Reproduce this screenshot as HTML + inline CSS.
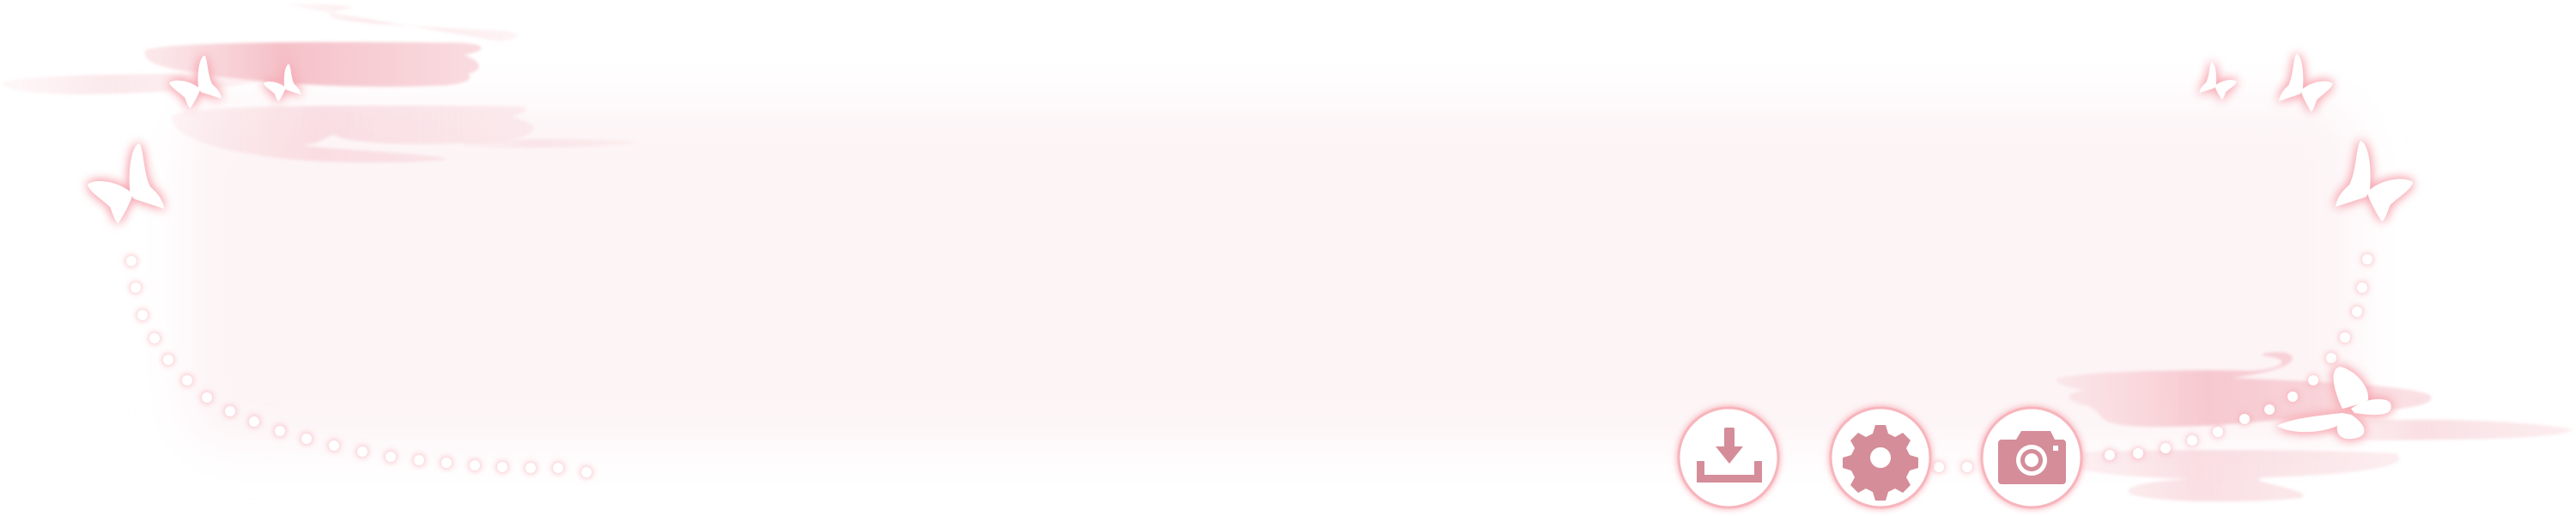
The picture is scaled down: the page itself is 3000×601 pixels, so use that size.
<!DOCTYPE html>
<html><head><meta charset="utf-8"><style>
html,body{margin:0;padding:0;background:#fff;}
body{width:3000px;height:601px;overflow:hidden;position:relative;}
svg{position:absolute;left:0;top:0;}
</style></head><body>
<svg width="3000" height="601" viewBox="0 0 3000 601" xmlns="http://www.w3.org/2000/svg">
<defs>
<filter id="blur40" x="-20%" y="-50%" width="140%" height="200%"><feGaussianBlur stdDeviation="28"/></filter>
<filter id="blur3"><feGaussianBlur stdDeviation="1.5"/></filter>
<filter id="glow" x="-50%" y="-50%" width="200%" height="200%">
<feGaussianBlur in="SourceAlpha" stdDeviation="6" result="b"/>
<feFlood flood-color="#f7a9b2"/><feComposite in2="b" operator="in" result="g"/>
<feMerge><feMergeNode in="g"/><feMergeNode in="g"/><feMergeNode in="SourceGraphic"/></feMerge>
</filter>
<filter id="dglow" x="-100%" y="-100%" width="300%" height="300%">
<feGaussianBlur in="SourceAlpha" stdDeviation="4" result="b"/>
<feFlood flood-color="#f7a3ad"/><feComposite in2="b" operator="in" result="g"/>
<feMerge><feMergeNode in="g"/><feMergeNode in="SourceGraphic"/></feMerge>
</filter>
<linearGradient id="cl" x1="0" x2="1"><stop offset="0" stop-color="#f8d3d8" stop-opacity=".5"/><stop offset=".4" stop-color="#f5c0c8"/><stop offset="1" stop-color="#f7cdd3" stop-opacity=".7"/></linearGradient>
<g id="bf">
<path d="M55,64 C52,35 56,5 66,1 C72,8 71,38 80,55 C88,62 95,70 97,82 L60,70 Z"/>
<path d="M56,62 C40,48 12,44 2,52 C5,62 20,70 30,80 C34,90 36,97 40,100 C47,90 52,80 57,68 Z"/>
</g>
</defs>

<rect x="215" y="120" width="2530" height="400" rx="50" fill="#fdf4f6" filter="url(#blur40)"/>

<g fill="url(#cl)" filter="url(#blur3)">
<path d="M335,6 C370,3 410,6 410,10 C390,12 375,16 390,22 C430,30 520,32 590,36 C610,40 605,46 580,48 Z" opacity=".35"/>
<path d="M170,58 C200,48 400,48 540,50 C570,52 565,60 540,64 C560,70 565,82 545,86 C555,95 530,100 500,100 C400,104 280,96 200,80 C170,74 165,64 170,58 Z"/>
<path d="M2,97 C10,86 220,84 310,88 C320,100 200,108 100,110 C50,110 5,106 2,97 Z" opacity=".35"/>
<path d="M200,135 C215,122 420,122 605,124 C625,128 600,134 595,136 C635,145 630,160 575,165 C500,170 420,168 395,160 C385,152 380,165 360,168 C320,172 520,178 520,186 C470,192 340,190 300,180 C230,172 195,150 200,135 Z" opacity=".45"/>
<path d="M540,165 C620,160 700,162 746,166 C700,172 600,174 540,170 Z" opacity=".3"/>
<path d="M2395,442 C2410,432 2560,430 2620,432 C2660,430 2670,418 2640,415 C2620,412 2660,408 2665,412 C2680,420 2660,432 2600,440 C2700,445 2800,448 2830,460 C2840,472 2800,478 2720,482 C2650,490 2540,502 2470,495 C2440,490 2450,480 2430,472 C2400,466 2405,456 2430,455 C2400,450 2395,446 2395,442 Z" opacity=".85"/>
<path d="M2700,492 C2800,486 2930,488 2996,500 C2990,512 2850,512 2780,513 C2740,514 2700,508 2700,492 Z" opacity=".5"/>
<path d="M2400,528 C2460,524 2650,522 2790,528 C2810,542 2760,552 2640,556 C2600,560 2700,570 2680,580 C2600,588 2500,584 2480,575 C2470,565 2510,560 2550,558 C2480,556 2420,550 2400,540 Z" opacity=".5"/>
</g>

<g fill="#fff" filter="url(#dglow)">
<circle cx="153" cy="304" r="6"/><circle cx="158" cy="335" r="6"/><circle cx="166" cy="367" r="6"/><circle cx="180" cy="394" r="6"/><circle cx="196" cy="419" r="6"/><circle cx="218" cy="443" r="6"/><circle cx="241" cy="463" r="6"/><circle cx="268" cy="479" r="6"/><circle cx="296" cy="491" r="6"/><circle cx="326" cy="502" r="6"/><circle cx="357" cy="511" r="6"/><circle cx="389" cy="519" r="6"/><circle cx="422" cy="526" r="6"/><circle cx="455" cy="532" r="6"/><circle cx="488" cy="536" r="6"/><circle cx="520" cy="539" r="6"/><circle cx="553" cy="542" r="6"/><circle cx="585" cy="544" r="6"/><circle cx="618" cy="545" r="6"/><circle cx="650" cy="545" r="6"/><circle cx="683" cy="550" r="6"/>
<circle cx="2757" cy="302" r="6"/><circle cx="2751" cy="335" r="6"/><circle cx="2745" cy="363" r="6"/><circle cx="2731" cy="393" r="6"/><circle cx="2715" cy="417" r="6"/><circle cx="2694" cy="443" r="6"/><circle cx="2670" cy="462" r="6"/><circle cx="2643" cy="477" r="6"/><circle cx="2614" cy="488" r="6"/><circle cx="2583" cy="503" r="6"/><circle cx="2553" cy="513" r="6"/><circle cx="2522" cy="522" r="6"/><circle cx="2490" cy="528" r="6"/><circle cx="2457" cy="530" r="6"/><circle cx="2258" cy="544" r="6"/><circle cx="2291" cy="544" r="6"/>
</g>

<g fill="#fff" filter="url(#glow)">
<use href="#bf" transform="translate(100,166) scale(0.94,0.94)"/>
<use href="#bf" transform="translate(196,64) scale(0.64,0.62)"/>
<use href="#bf" transform="translate(306,74) scale(0.46,0.44)"/>
<use href="#bf" transform="translate(2606,72) scale(-0.46,0.44)"/>
<use href="#bf" transform="translate(2718,62) scale(-0.66,0.68)"/>
<use href="#bf" transform="translate(2812,163) scale(-0.95,0.95)"/>
<path d="M2728,476 C2718,455 2712,430 2725,427 C2740,430 2760,448 2758,466 C2745,472 2735,474 2728,476 Z"/>
<path d="M2738,476 C2755,463 2780,462 2784,470 C2788,482 2775,486 2742,481 Z"/>
<path d="M2728,481 C2700,484 2665,488 2652,496 C2665,505 2700,506 2722,496 C2720,508 2730,514 2745,510 C2762,505 2750,490 2738,483 Z"/>
</g>

<g fill="#fff" stroke="#f7b5bc" stroke-width="3" filter="url(#dglow)">
<circle cx="2013" cy="533" r="58"/><circle cx="2190" cy="533" r="58"/><circle cx="2366" cy="533" r="58"/>
</g>
<g fill="#d48d99">
<rect x="2008" y="498" width="12" height="24" rx="2"/>
<path d="M1998,520 L2030,520 L2014,540 Z"/>
<path d="M1976,537 h9 v16 h58 v-16 h9 v25 h-76 Z"/>
<path fill-rule="evenodd" d="M2184,495 h12 l3,10 l8,4 l9,-5 l9,9 l-5,9 l4,8 l10,3 v12 l-10,3 l-4,8 l5,9 l-9,9 l-9,-5 l-8,4 l-3,10 h-12 l-3,-10 l-8,-4 l-9,5 l-9,-9 l5,-9 l-4,-8 l-10,-3 v-12 l10,-3 l4,-8 l-5,-9 l9,-9 l9,5 l8,-4 Z M2190,521 a12,12 0 1,0 0.01,0 Z"/>
<path fill-rule="evenodd" d="M2331,512 h17 l6,-10 h34 l5,10 h9 a4,4 0 0 1 4,4 v44 a4,4 0 0 1 -4,4 h-71 a4,4 0 0 1 -4,-4 v-44 a4,4 0 0 1 4,-4 Z M2366,518 a18,18 0 1,0 0.01,0 Z M2366,523 a13,13 0 1,1 -0.01,0 Z M2366,528 a8,8 0 1,0 0.01,0 Z M2391,519 h6 v6 h-6 Z"/>
</g>
</svg>
</body></html>
